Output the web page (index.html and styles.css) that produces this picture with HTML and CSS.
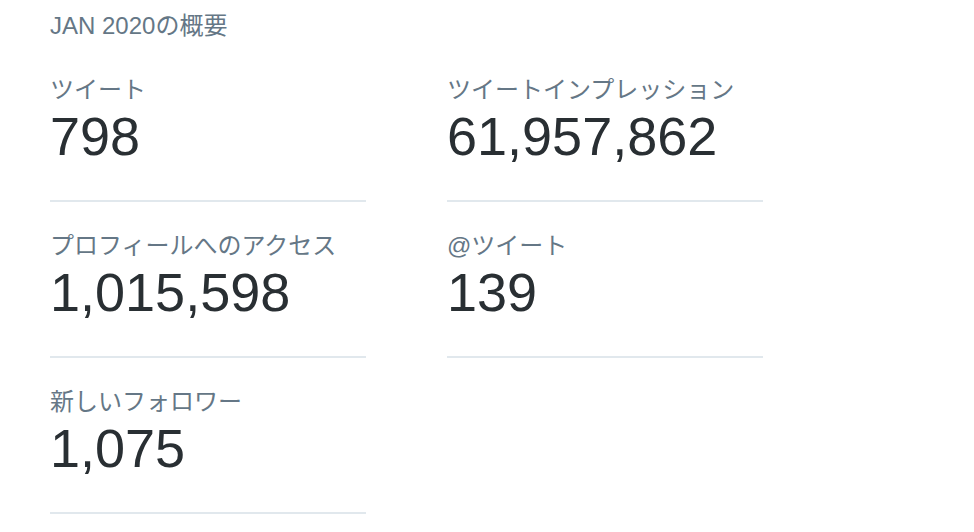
FILE: index.html
```html
<!DOCTYPE html>
<html lang="ja">
<head>
<meta charset="utf-8">
<link rel="stylesheet" href="styles.css">
</head>
<body>
<div class="summary">
  <div class="title">JAN 2020の概要</div>
  <div class="grid">
    <div class="stat">
      <div class="label">ツイート</div>
      <div class="value">798</div>
    </div>
    <div class="stat">
      <div class="label">ツイートインプレッション</div>
      <div class="value">61,957,862</div>
    </div>
    <div class="stat">
      <div class="label">プロフィールへのアクセス</div>
      <div class="value">1,015,598</div>
    </div>
    <div class="stat">
      <div class="label">@ツイート</div>
      <div class="value">139</div>
    </div>
    <div class="stat">
      <div class="label">新しいフォロワー</div>
      <div class="value">1,075</div>
    </div>
  </div>
</div>
</body>
</html>
```

FILE: styles.css
```css
html, body {
  margin: 0;
  padding: 0;
  background: #ffffff;
}

body {
  font-family: "Liberation Sans", Arial, "Noto Sans CJK JP", sans-serif;
}

.summary {
  padding: 10px 0 0 50px;
}

.title {
  font-size: 24px;
  line-height: 32px;
  color: #657786;
}

.grid {
  margin-top: 4px;
  display: grid;
  grid-template-columns: 316px 316px;
  column-gap: 81px;
}

.stat {
  padding: 28px 0 34px 0;
  border-bottom: 2px solid #e1e8ed;
}

.label {
  font-size: 24px;
  line-height: 32px;
  color: #657786;
  white-space: nowrap;
}

.value {
  font-size: 54px;
  line-height: 60px;
  color: #292f33;
  white-space: nowrap;
}
```
